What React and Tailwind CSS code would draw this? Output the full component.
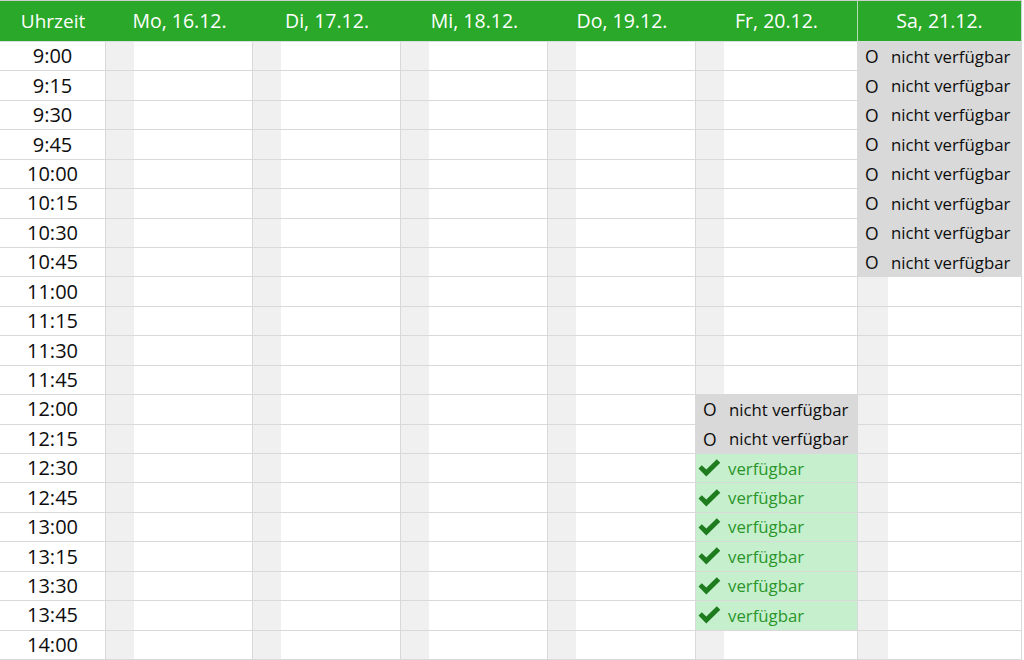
import React from "react";

const times = ["9:00","9:15","9:30","9:45","10:00","10:15","10:30","10:45","11:00","11:15","11:30","11:45","12:00","12:15","12:30","12:45","13:00","13:15","13:30","13:45","14:00"];
const days = ["Mo, 16.12.","Di, 17.12.","Mi, 18.12.","Do, 19.12.","Fr, 20.12.","Sa, 21.12."];

function status(day, row) {
  if (day === 4) {
    if (row === 12 || row === 13) return "na";
    if (row >= 14 && row <= 19) return "ok";
  }
  if (day === 5 && row <= 7) return "na";
  return "empty";
}

function Check() {
  return (
    <svg width="23" height="18" viewBox="0 0 23 18" className="shrink-0">
      <path d="M0.5 9.5 L3.8 6.2 L8.3 10.6 L18.8 0.3 L22.3 3.7 L8.3 17.4 Z" fill="#1e7b1e" />
    </svg>
  );
}

function Cell({ day, row }) {
  const s = status(day, row);
  const base = "border-r border-b border-[#d9d9d9] flex items-center";
  if (s === "na") {
    return (
      <div className={`${base} bg-[#d9d9d9] text-[16.8px] text-[#0d0d0d]`}>
        <span className="w-[33px] pl-[7px] shrink-0 text-[17.5px]">O</span>
        <span>nicht verfügbar</span>
      </div>
    );
  }
  if (s === "ok") {
    return (
      <div className={`${base} bg-[#c6efce] text-[16.8px] text-[#2a962a]`}>
        <span className="w-[32px] pl-[2px] shrink-0 flex items-center"><Check /></span>
        <span>verfügbar</span>
      </div>
    );
  }
  return (
    <div className={`${base} items-stretch bg-white`}>
      <div className={`${day === 5 ? "w-[30px]" : "w-[28px]"} bg-[#f0f0f0] shrink-0`} />
    </div>
  );
}

export default function App() {
  return (
    <div
      className="w-[1024px] h-[660px] overflow-hidden bg-white"
      style={{ fontFamily: '"Open Sans", "Noto Sans", sans-serif' }}
    >
      <div className="grid w-[1022px] h-[660px] grid-cols-[106px_147px_148px_147px_148px_162px_164px] grid-rows-[42px_repeat(21,minmax(0,1fr))]">
        <div className="bg-[#29a829] border-t border-t-[#cfcfcf] border-b border-b-[#dcdcdc] flex items-center justify-center text-white text-[19px]">
          Uhrzeit
        </div>
        {days.map((d, i) => (
          <div
            key={d}
            className={`bg-[#29a829] border-t border-t-[#cfcfcf] border-b border-b-[#dcdcdc] flex items-center justify-center text-white text-[19.5px] ${i === 4 ? "border-r border-r-[#b9d6b9]" : ""} ${i === 5 ? "border-r border-r-[#cfcfcf]" : ""}`}
          >
            {d}
          </div>
        ))}
        {times.map((t, r) => (
          <React.Fragment key={t}>
            <div className="border-r border-b border-[#d9d9d9] flex items-center justify-center text-[20px] text-[#0d0d0d]">
              {t}
            </div>
            {days.map((d, di) => (
              <Cell key={d} day={di} row={r} />
            ))}
          </React.Fragment>
        ))}
      </div>
    </div>
  );
}
